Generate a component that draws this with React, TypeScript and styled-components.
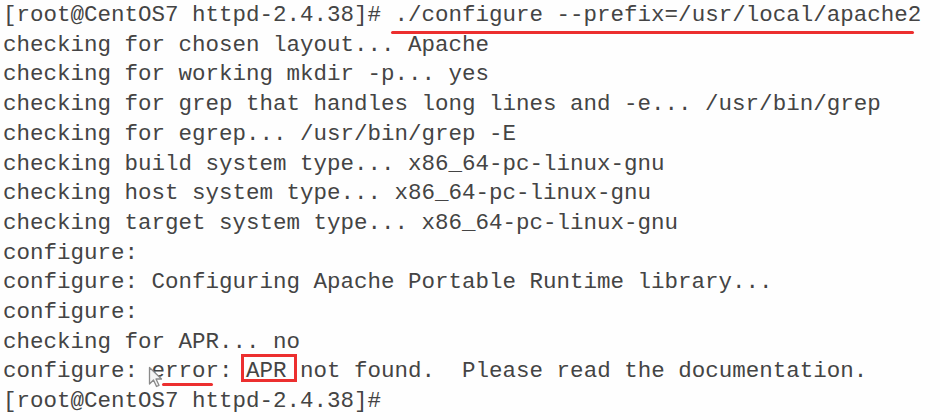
import React from "react";
import styled, { createGlobalStyle } from "styled-components";

const Global = createGlobalStyle`
  html, body { margin: 0; padding: 0; background: #fefefe; }
  body { width: 940px; height: 420px; overflow: hidden; }
`;

const Terminal = styled.div`
  box-sizing: border-box;
  display: flex;
  flex-direction: column;
  width: 940px;
  height: 420px;
  padding: 1px 0 0 3px;
  background: #fefefe;
  font-family: "Liberation Mono", "DejaVu Sans Mono", monospace;
  font-size: 22.5px;
  line-height: 29.7px;
  color: #444444;
  white-space: pre;
`;

const Line = styled.div`
  flex: 0 0 29.7px;
`;

const Mark = styled.span`
  display: inline-block;
  position: relative;
`;

const Underline = styled.span<{ $left: number; $top: number; $width: number }>`
  position: absolute;
  left: ${(p) => p.$left}px;
  top: ${(p) => p.$top}px;
  width: ${(p) => p.$width}px;
  height: 3px;
  border-radius: 2px;
  background: #ec2f2f;
`;

const Box = styled.span`
  position: absolute;
  left: -5px;
  top: -3.5px;
  width: 56px;
  height: 28px;
  box-sizing: border-box;
  border: 3px solid #ec2f2f;
`;

const Cursor = styled.svg`
  position: absolute;
  left: -4px;
  top: 9px;
  width: 16px;
  height: 22px;
  filter: blur(0.5px);
`;

const lines: string[] = [
  "checking for chosen layout... Apache",
  "checking for working mkdir -p... yes",
  "checking for grep that handles long lines and -e... /usr/bin/grep",
  "checking for egrep... /usr/bin/grep -E",
  "checking build system type... x86_64-pc-linux-gnu",
  "checking host system type... x86_64-pc-linux-gnu",
  "checking target system type... x86_64-pc-linux-gnu",
  "configure:",
  "configure: Configuring Apache Portable Runtime library...",
  "configure:",
  "checking for APR... no",
];

export default function App() {
  return (
    <>
      <Global />
      <Terminal>
        <Line>
          {"[root@CentOS7 httpd-2.4.38]# "}
          <Mark>
            ./configure --prefix=/usr/local/apache2
            <Underline $left={-4} $top={30} $width={523} />
          </Mark>
        </Line>
        {lines.map((l, i) => (
          <Line key={i}>{l}</Line>
        ))}
        <Line>
          {"configure: "}
          <Mark>
            error
            <Underline $left={10} $top={25.5} $width={51} />
            <Cursor viewBox="0 0 16 22">
              <path
                d="M1.5 1.5 L1.5 18 L5.5 14 L8.5 20.5 L11 19.3 L8 13 L13.5 13 Z"
                fill="#f4f4f4"
                stroke="#8a8a8a"
                strokeWidth="1.3"
                strokeLinejoin="round"
              />
            </Cursor>
          </Mark>
          {": "}
          <Mark>
            APR
            <Box />
          </Mark>
          {" not found.  Please read the documentation."}
        </Line>
        <Line>{"[root@CentOS7 httpd-2.4.38]#"}</Line>
      </Terminal>
    </>
  );
}
